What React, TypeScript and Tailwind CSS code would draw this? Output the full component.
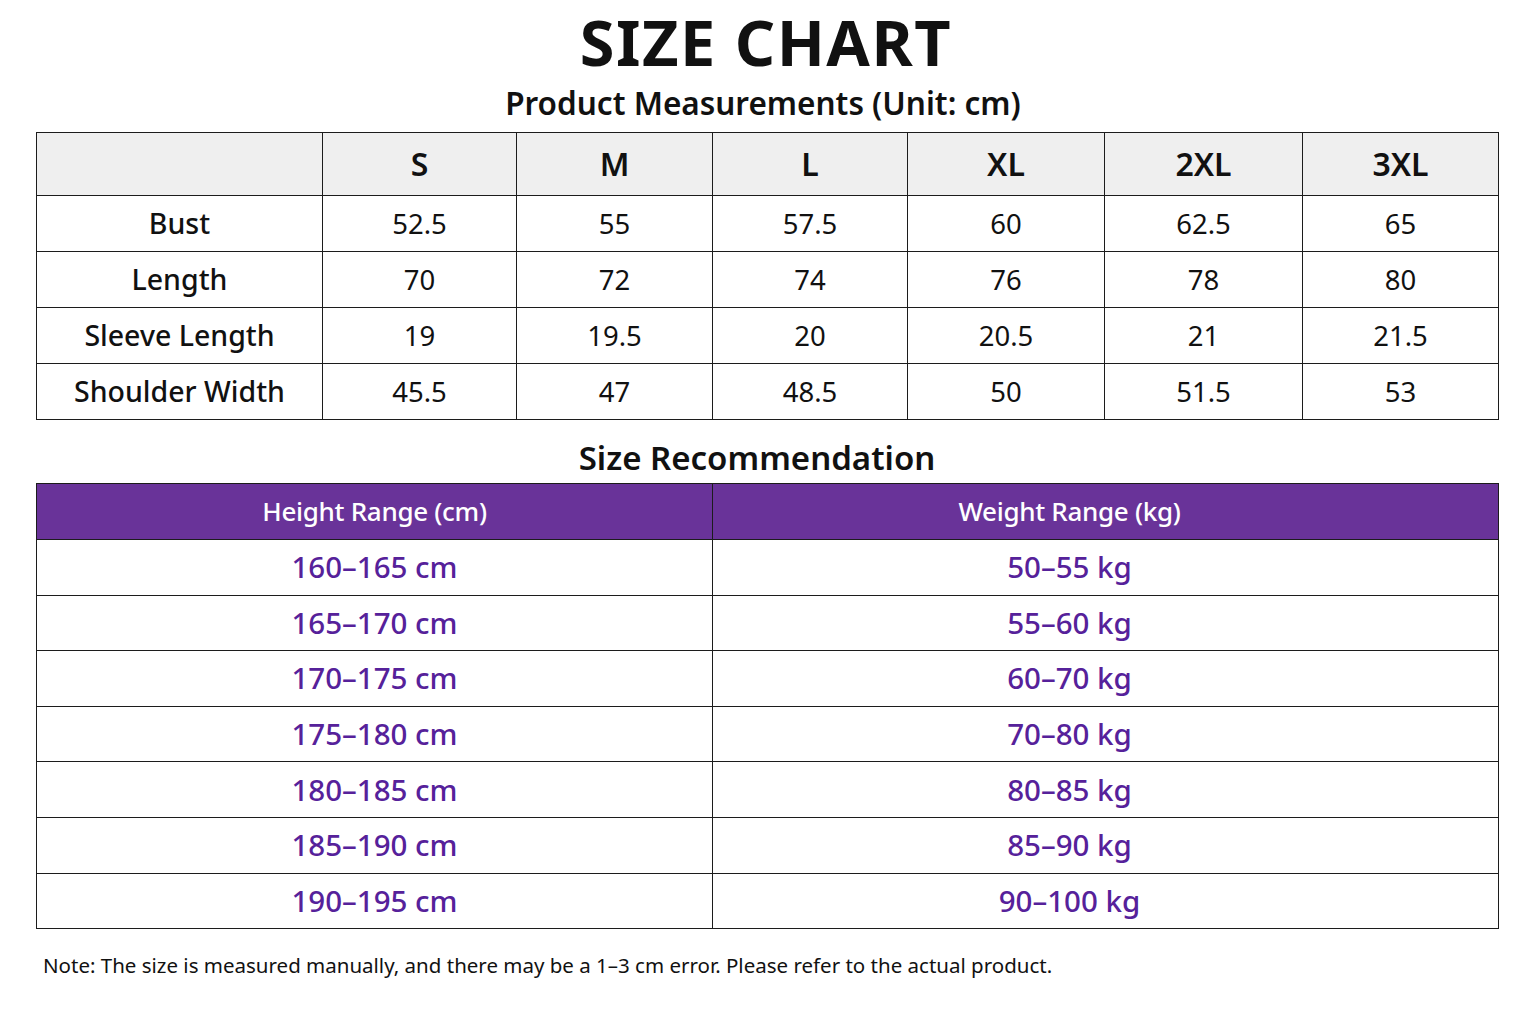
import React from "react"

const sizes = ["S", "M", "L", "XL", "2XL", "3XL"]

const measurements = [
    { label: "Bust", values: ["52.5", "55", "57.5", "60", "62.5", "65"] },
    { label: "Length", values: ["70", "72", "74", "76", "78", "80"] },
    { label: "Sleeve Length", values: ["19", "19.5", "20", "20.5", "21", "21.5"] },
    { label: "Shoulder Width", values: ["45.5", "47", "48.5", "50", "51.5", "53"] },
]

const recommendations = [
    ["160–165 cm", "50–55 kg"],
    ["165–170 cm", "55–60 kg"],
    ["170–175 cm", "60–70 kg"],
    ["175–180 cm", "70–80 kg"],
    ["180–185 cm", "80–85 kg"],
    ["185–190 cm", "85–90 kg"],
    ["190–195 cm", "90–100 kg"],
]

const colWidths = ["w-[286px]", "w-[194px]", "w-[196px]", "w-[195px]", "w-[197px]", "w-[198px]", "w-[196px]"]

const MeasurementTable = () => (
    <table className="w-[1462px] border-collapse table-fixed border-[1.5px] border-[#1c1c1c]">
        <colgroup>
            {colWidths.map((w, i) => <col key={i} className={w} />)}
        </colgroup>
        <thead>
            <tr className="h-[63px] bg-[#efefef]">
                <th className="border-[1.5px] border-[#1c1c1c]"></th>
                {sizes.map((s) => (
                    <th key={s} className="border-[1.5px] border-[#1c1c1c] text-[32px] font-semibold text-[#111]">
                        {s}
                    </th>
                ))}
            </tr>
        </thead>
        <tbody>
            {measurements.map((row) => (
                <tr key={row.label} className="h-[56px]">
                    <td className="border-[1.5px] border-[#1c1c1c] text-center text-[28.5px] font-medium text-[#111]">
                        {row.label}
                    </td>
                    {row.values.map((v, i) => (
                        <td key={i} className="border-[1.5px] border-[#1c1c1c] text-center text-[27.5px] text-[#111]">
                            {v}
                        </td>
                    ))}
                </tr>
            ))}
        </tbody>
    </table>
)

const RecommendationTable = () => (
    <table className="w-[1462px] border-collapse table-fixed border-[1.5px] border-[#1c1c1c]">
        <colgroup>
            <col className="w-[676px]" />
            <col className="w-[786px]" />
        </colgroup>
        <thead>
            <tr className="h-[56px] bg-[#693399]">
                <th className="border-[1.5px] border-[#1c1c1c] text-[26px] font-medium text-white tracking-[-0.3px]">
                    Height Range (cm)
                </th>
                <th className="border-[1.5px] border-[#1c1c1c] pr-[72px] text-[26px] font-medium text-white tracking-[-0.3px]">
                    Weight Range (kg)
                </th>
            </tr>
        </thead>
        <tbody>
            {recommendations.map(([h, w]) => (
                <tr key={h} className="h-[55.6px]">
                    <td className="border-[1.5px] border-[#1c1c1c] text-center text-[29.5px] font-medium text-[#56219a]">
                        {h}
                    </td>
                    <td className="border-[1.5px] border-[#1c1c1c] pr-[72px] text-center text-[29.5px] font-medium text-[#56219a]">
                        {w}
                    </td>
                </tr>
            ))}
        </tbody>
    </table>
)

export default function App() {
    return (
        <div
            className="w-[1536px] h-[1024px] bg-white flex flex-col items-center text-[#111]"
            style={{ fontFamily: '"Noto Sans", "Open Sans", sans-serif' }}
        >
            <h1 className="mt-[6px] h-[72px] leading-[72px] text-[63px] font-bold tracking-[1.5px] text-[#111] ml-[-4px]">
                SIZE CHART
            </h1>
            <h2 className="mt-[3px] h-[44px] leading-[44px] text-[31.5px] font-semibold ml-[-10px]">
                Product Measurements (Unit: cm)
            </h2>
            <div className="mt-[7px] ml-[-1px]">
                <MeasurementTable />
            </div>
            <h2 className="mt-[16px] h-[44px] leading-[44px] text-[33px] font-semibold ml-[-22px]">
                Size Recommendation
            </h2>
            <div className="mt-[3px] ml-[-1px]">
                <RecommendationTable />
            </div>
            <p className="self-start ml-[43px] mt-[21px] text-[20.5px] text-[#111]">
                Note: The size is measured manually, and there may be a 1–3 cm error. Please refer to the actual product.
            </p>
        </div>
    )
}
